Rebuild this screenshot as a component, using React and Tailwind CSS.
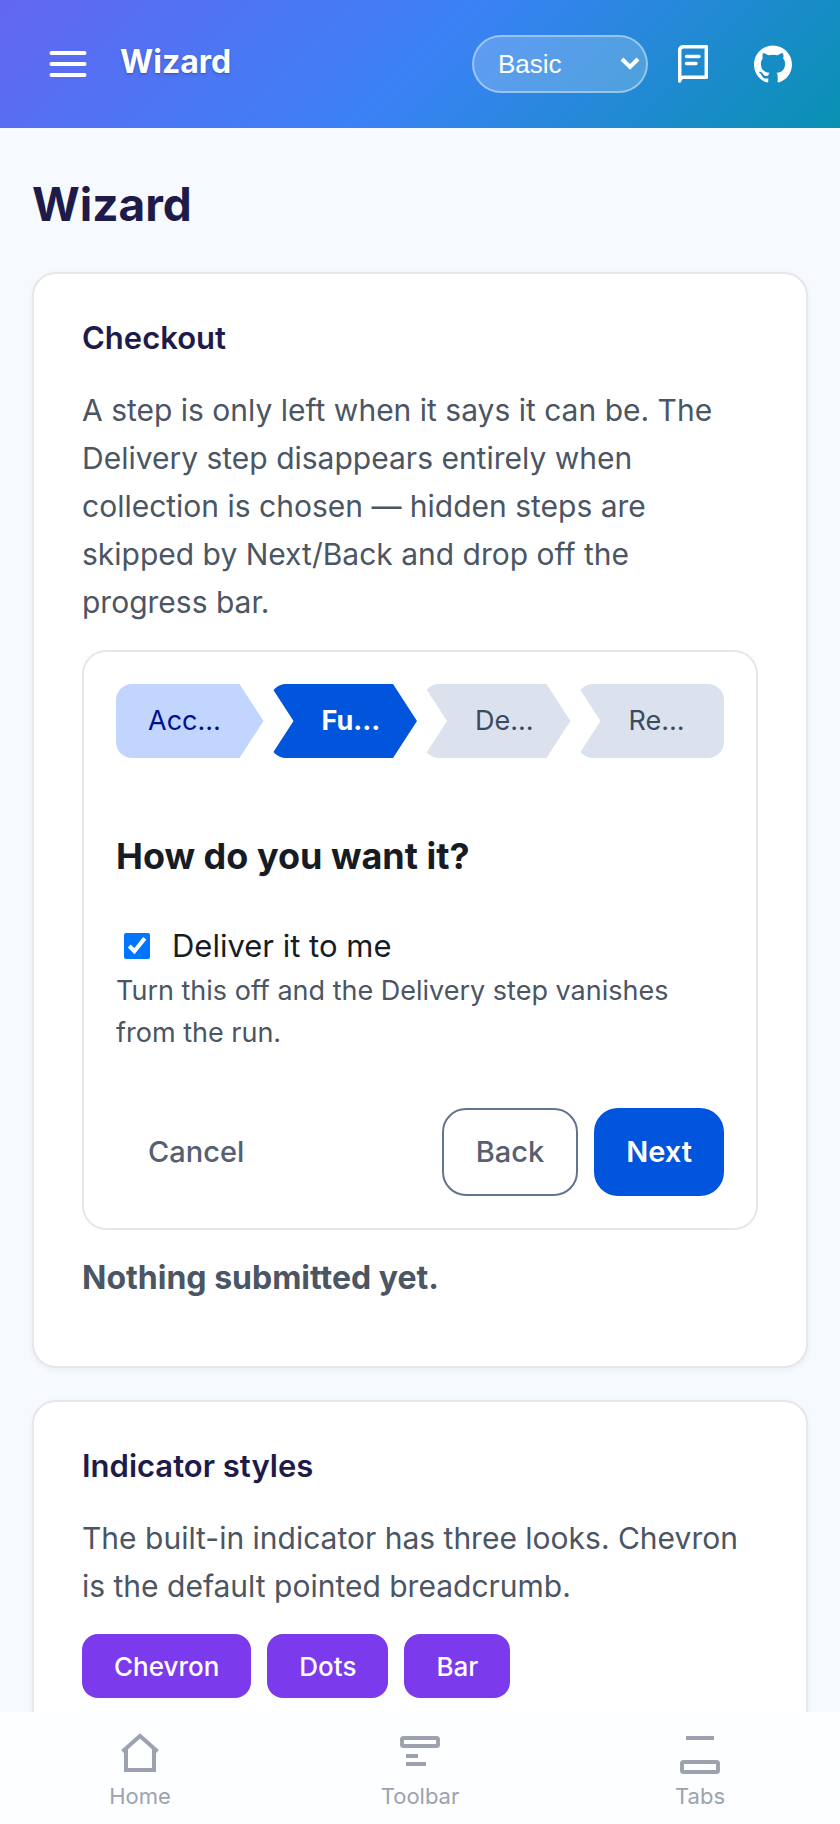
import { useState } from 'react';
import { SiGithub } from 'react-icons/si';

const steps = [
  { id: 'account', label: 'Acc…', state: 'done' },
  { id: 'fulfilment', label: 'Fu…', state: 'current' },
  { id: 'delivery', label: 'De…', state: 'todo' },
  { id: 'review', label: 'Re…', state: 'todo' },
];

const stateClass = {
  done: 'bg-[#c2d5ff] text-[#00108a]',
  current: 'bg-[#0055dc] text-white font-bold',
  todo: 'bg-[#dbe2ee] text-[#3b4a60]',
};

// pointed on the right, notched on the left; the ends of the row stay square
function shapeClass(i, last) {
  if(i===0) return 'pl-8 [clip-path:polygon(0_0,calc(100%-24px)_0,100%_50%,calc(100%-24px)_100%,0_100%)]';
  if(i===last) return 'pl-13 [clip-path:polygon(0_0,100%_0,100%_100%,0_100%,24px_50%)]';
  return 'pl-13 [clip-path:polygon(0_0,calc(100%-24px)_0,100%_50%,calc(100%-24px)_100%,0_100%,24px_50%)]';
}

function Steps() {
  return (<ol className="grid grid-cols-4 gap-1.5">
    {steps.map((s,i)=>(
      <li key={s.id} aria-current={s.state==='current'?'step':undefined}
        className={`min-w-0 rounded-2xl py-4 text-[27px] leading-[42px] whitespace-nowrap ${stateClass[s.state]} ${shapeClass(i,steps.length-1)}`}>{s.label}</li>
    ))}
  </ol>);
}

function Card({ title, children }) {
  return (<section className="rounded-3xl border-2 border-gray-200 bg-white px-12 pt-10 pb-16 shadow-[0_2px_6px_rgba(0,0,0,0.05)]">
    <h2 className="text-[31px] leading-12 font-semibold text-[#1e1b4b]">{title}</h2>
    {children}
  </section>);
}

function MenuIcon() {
  return (<svg viewBox="0 0 40 28" className="h-7 w-10" stroke="currentColor" strokeWidth="4" strokeLinecap="round" aria-hidden="true">
    <path d="M3.500 3h33M3.500 14h33M3.500 25h33" />
  </svg>);
}

function BookIcon() {
  return (<svg viewBox="0 0 30 38" className="w-[30px] h-[38px]" fill="none" stroke="currentColor" strokeWidth="3.5" strokeLinecap="round" strokeLinejoin="round" aria-hidden="true">
    <path d="M1.700 36V5.700q0-4 4-4H28.300V32.300H5q-1.500 0-3.300 3z" />
    <path d="M8.500 11.500H21M8.500 18.500H18" />
  </svg>);
}

function HomeIcon() {
  return (<svg viewBox="0 0 40 40" className="size-10" fill="none" stroke="currentColor" strokeWidth="4" aria-hidden="true">
    <path d="M2.500 19.500 20 4l17.500 15.500M6 17v21h28V17" />
  </svg>);
}

function ToolbarIcon() {
  return (<svg viewBox="0 0 40 40" className="size-10" fill="none" stroke="currentColor" strokeWidth="4" aria-hidden="true">
    <rect x="2" y="6" width="36" height="8" rx="1.500" />
    <path d="M6 24h12M6 32h20" />
  </svg>);
}

function TabsIcon() {
  return (<svg viewBox="0 0 40 44" className="h-11 w-10 -mb-1" fill="none" stroke="currentColor" strokeWidth="4" aria-hidden="true">
    <path d="M6 6h28" />
    <rect x="2" y="30" width="36" height="10" rx="1.500" />
  </svg>);
}

const tabs = [
  { name: 'Home', Icon: HomeIcon },
  { name: 'Toolbar', Icon: ToolbarIcon },
  { name: 'Tabs', Icon: TabsIcon },
];

export default function App() {
  const [deliver, setDeliver] = useState(true);

  return (<div className="flex h-screen flex-col bg-[#f6f9fe] font-[Inter,'Liberation_Sans',sans-serif]">
    <header className="flex h-32 shrink-0 items-center bg-[linear-gradient(135deg,#6366f1_0%,#3b82f6_50%,#0891b2_100%)] px-12 text-white">
      <button type="button" aria-label="Menu" className="mr-8"><MenuIcon/></button>
      <div className="flex-1 pb-1 text-[32px] leading-12 font-bold text-shadow-md">Wizard</div>
      <div className="relative mr-7.5">
        <select aria-label="Theme" className="h-[58px] w-44 appearance-none rounded-full border-2 border-white/40 bg-white/20 pl-6 font-['Liberation_Sans',sans-serif] text-[26px]">
          <option>Basic</option>
        </select>
        <svg viewBox="0 0 20 14" className="pointer-events-none absolute top-5.5 right-2 h-3.5 w-5" fill="none" stroke="currentColor" strokeWidth="4" aria-hidden="true"><path d="m2 2 8 8 8-8"/></svg>
      </div>
      <a href="#docs" aria-label="Docs" className="mr-11.5"><BookIcon/></a>
      <a href="#github" aria-label="GitHub"><SiGithub className="size-[38px]"/></a>
    </header>

    <main className="flex-1 overflow-y-auto px-8 pt-11 pb-8 [scrollbar-width:none]">
      <h1 className="mb-9 text-[46px] leading-16 font-bold text-[#1e1b4b]">Wizard</h1>

      <div className="flex flex-col gap-8">
        <Card title="Checkout">
          <p className="mt-6 text-[30px] leading-12 text-[#4b5563]">A step is only left when it says it can be. The Delivery step disappears entirely when collection is chosen — hidden steps are skipped by Next/Back and drop off the progress bar.</p>
          <div className="mt-6 rounded-3xl border-2 border-gray-200 p-8">
            <Steps/>
            <h3 className="mt-18 text-[36px] leading-13 font-bold text-[#171c24]">How do you want it?</h3>
            <label className="mt-10 flex items-center gap-[22px] pl-2 text-[31px] leading-12 text-[#171c24]">
              <input type="checkbox" checked={deliver} onChange={e=>setDeliver(e.target.checked)} className="size-[26px] accent-[#0075ff]"/>
              Deliver it to me
            </label>
            <p className="text-[27px] leading-[42px] text-[#4b5563]">Turn this off and the Delivery step vanishes from the run.</p>
            <div className="mt-[54px] flex gap-4 text-[29px] leading-11 font-medium">
              <button type="button" className="mr-auto px-8 py-[22px] text-[#566070]">Cancel</button>
              <button type="button" className="rounded-3xl border-2 border-slate-500 px-8 py-5 text-[#566070]">Back</button>
              <button type="button" className="rounded-3xl bg-[#0055dc] px-8 py-[22px] font-semibold text-white">Next</button>
            </div>
          </div>
          <p className="mt-6 text-[32px] leading-12 font-bold text-[#4b5563]">Nothing submitted yet.</p>
        </Card>

        <Card title="Indicator styles">
          <p className="mt-6 text-[30px] leading-12 text-[#4b5563]">The built-in indicator has three looks. Chevron is the default pointed breadcrumb.</p>
          <div className="mt-6 flex gap-4">
            {['Chevron','Dots','Bar'].map(b=><button key={b} type="button" className="h-16 rounded-2xl bg-[#7c3aed] px-8 text-[26px] font-medium text-white">{b}</button>)}
          </div>
        </Card>
      </div>
    </main>

    <nav className="flex h-28 shrink-0 bg-[#fdfeff] text-[#9ca3af]">
      {tabs.map(({name,Icon})=>(
        <a key={name} href={'#'+name.toLowerCase()} className="flex flex-1 flex-col items-center gap-2 pt-5">
          <Icon/>
          <span className="text-[22px] leading-8">{name}</span>
        </a>
      ))}
    </nav>
  </div>);
}
